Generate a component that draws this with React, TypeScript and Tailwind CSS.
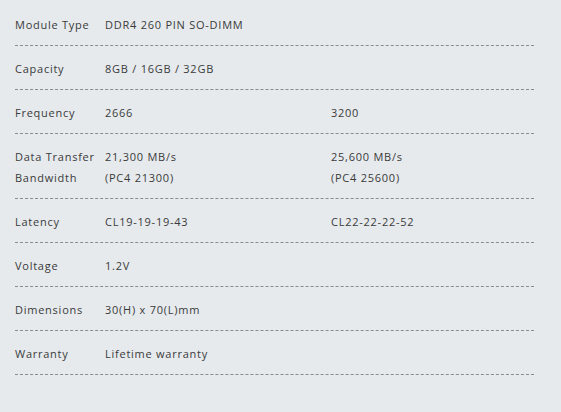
import React from 'react';

interface SpecRow {
  label: string[];
  values: string[][];
}

const rows: SpecRow[] = [
  { label: ['Module Type'], values: [['DDR4 260 PIN SO-DIMM']] },
  { label: ['Capacity'], values: [['8GB / 16GB / 32GB']] },
  { label: ['Frequency'], values: [['2666'], ['3200']] },
  {
    label: ['Data Transfer', 'Bandwidth'],
    values: [
      ['21,300 MB/s', '(PC4 21300)'],
      ['25,600 MB/s', '(PC4 25600)'],
    ],
  },
  { label: ['Latency'], values: [['CL19-19-19-43'], ['CL22-22-22-52']] },
  { label: ['Voltage'], values: [['1.2V']] },
  { label: ['Dimensions'], values: [['30(H) x 70(L)mm']] },
  { label: ['Warranty'], values: [['Lifetime warranty']] },
];

const App: React.FC = () => {
  return (
    <div
      className="w-[561px] h-[412px] bg-[#e6eaed] text-[#3a3a3a] pt-[2px] pl-[15px] pr-[27px] text-[11px] tracking-[0.75px]"
      style={{ fontFamily: '"Open Sans", "Noto Sans", sans-serif' }}
    >
      {rows.map((row) => (
        <div key={row.label[0]} className="flex border-b border-dashed border-[#8a8d90] pt-[12px] pb-[10px]">
          <div className="w-[90px] shrink-0">
            {row.label.map((l) => (
              <div key={l} className="leading-[21px]">
                {l}
              </div>
            ))}
          </div>
          {row.values.map((v, i) => (
            <div key={i} className={i === 0 ? 'w-[226px] shrink-0' : 'flex-1'}>
              {v.map((t) => (
                <div key={t} className="leading-[21px]">
                  {t}
                </div>
              ))}
            </div>
          ))}
        </div>
      ))}
    </div>
  );
};

export default App;
